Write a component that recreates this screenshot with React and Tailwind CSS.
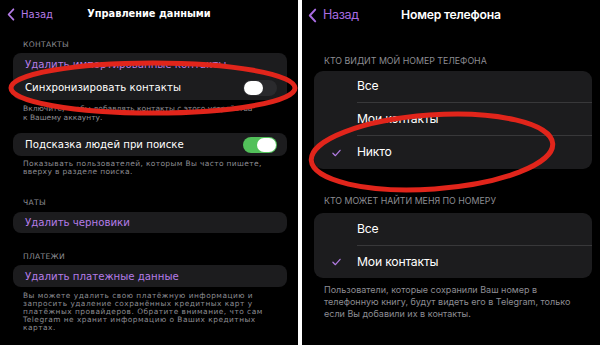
import React from 'react';

const leftFont = { fontFamily: '"DejaVu Sans", "Noto Sans", sans-serif' };
const rightFont = { fontFamily: 'Inter, "Noto Sans", sans-serif' };

function Chevron({ className }) {
  return (
    <svg viewBox="0 0 10 16" className={className} fill="none">
      <path d="M8 1.5 L2 8 L8 14.5" stroke="currentColor" strokeWidth="2.2" strokeLinecap="round" strokeLinejoin="round" />
    </svg>
  );
}

function Check() {
  return (
    <svg viewBox="0 0 10 8" className="w-[9px] h-[8px] text-[#b07ae0]" fill="none">
      <path d="M1 4.2 L3.8 7 L9 1" stroke="currentColor" strokeWidth="1.4" strokeLinecap="round" strokeLinejoin="round" />
    </svg>
  );
}

function Toggle({ on }) {
  return (
    <div className={`w-[34px] h-[16px] rounded-full flex items-center px-[1px] ${on ? 'bg-[#52c05a] justify-end' : 'bg-[#2a2a2d] justify-start'}`}>
      <div className="w-[19px] h-[14px] rounded-full bg-white" />
    </div>
  );
}

function LeftSection({ title, h, pb }) {
  return (
    <div className={`flex items-end px-[23px] text-[7.6px] leading-[8px] text-[#8d8d93] tracking-[0.3px] ${h} ${pb}`}>
      {title}
    </div>
  );
}

// footer text with the same line breaks as the screenshot
function Lines({ lines, className }) {
  return (
    <div className={`px-[23px] text-[#8d8d93] whitespace-nowrap ${className}`}>
      {lines.map((l) => (
        <div key={l}>{l}</div>
      ))}
    </div>
  );
}

function LeftPanel() {
  return (
    <div className="w-[298px] h-full bg-black flex flex-col" style={leftFont}>
      <div className="h-[28px] grid grid-cols-[1fr_auto_1fr] items-center">
        <div className="flex items-center pl-[7px] text-[#b57ce8]">
          <Chevron className="w-[8px] h-[13px]" />
          <span className="ml-[6px] text-[10px]">Назад</span>
        </div>
        <div className="text-white font-bold text-[9.8px]">Управление данными</div>
        <div />
      </div>

      <LeftSection title="КОНТАКТЫ" h="h-[25px]" pb="pb-[4px]" />
      <div className="ml-[13px] mr-[11px] rounded-[8px] bg-[#1c1c1e] text-[10.2px]">
        <div className="h-[23px] flex items-center px-[12px] text-[#b57ce8]">Удалить импортированные контакты</div>
        <div className="h-[24px] flex items-center justify-between pl-[12px] pr-[10px] text-white">
          <span>Синхронизировать контакты</span>
          <Toggle on={false} />
        </div>
      </div>
      <Lines
        className="pt-[4px] text-[7.5px] leading-[9px]"
        lines={['Включите, чтобы добавлять контакты с этого устройства', 'к Вашему аккаунту.']}
      />

      <div className="mt-[11px] ml-[13px] mr-[11px] rounded-[8px] bg-[#1c1c1e] text-[10.2px]">
        <div className="h-[23px] flex items-center justify-between pl-[12px] pr-[10px] text-white">
          <span>Подсказка людей при поиске</span>
          <Toggle on />
        </div>
      </div>
      <Lines
        className="pt-[4px] text-[7.5px] leading-[8.2px] tracking-[0.35px]"
        lines={['Показывать пользователей, которым Вы часто пишете,', 'вверху в разделе поиска.']}
      />

      <LeftSection title="ЧАТЫ" h="h-[36px]" pb="pb-[5px]" />
      <div className="ml-[13px] mr-[11px] rounded-[8px] bg-[#1c1c1e] text-[10.2px]">
        <div className="h-[21px] flex items-center px-[12px] text-[#b57ce8]">Удалить черновики</div>
      </div>

      <LeftSection title="ПЛАТЕЖИ" h="h-[32px]" pb="pb-[4px]" />
      <div className="ml-[13px] mr-[11px] rounded-[8px] bg-[#1c1c1e] text-[10.2px]">
        <div className="h-[22px] flex items-center px-[12px] text-[#b57ce8]">Удалить платежные данные</div>
      </div>
      <Lines
        className="pt-[5px] text-[7.4px] leading-[8px] tracking-[0.5px]"
        lines={[
          'Вы можете удалить свою платёжную информацию и',
          'запросить удаление сохранённых кредитных карт у',
          'платёжных провайдеров. Обратите внимание, что сам',
          'Telegram не хранит информацию о Ваших кредитных',
          'картах.',
        ]}
      />
    </div>
  );
}

function OptionRow({ label, checked, last, h }) {
  return (
    <div className={`flex ${h}`}>
      <div className="w-[43px] pl-[18px] flex items-center">{checked && <Check />}</div>
      <div className={`flex-1 flex items-center text-white ${last ? '' : 'border-b border-[#38383a]'}`}>{label}</div>
    </div>
  );
}

function RightPanel() {
  return (
    <div className="w-[298px] h-full bg-black flex flex-col" style={rightFont}>
      <div className="h-[30px] grid grid-cols-[1fr_auto_1fr] items-center">
        <div className="flex items-center pl-[6px] text-[#a96ce2]">
          <Chevron className="w-[9px] h-[15px]" />
          <span className="ml-[6px] text-[12.5px] tracking-[-0.3px]">Назад</span>
        </div>
        <div className="text-white font-semibold text-[12.2px] tracking-[-0.2px]">Номер телефона</div>
        <div />
      </div>

      <div className="h-[41px] flex items-end pb-[5px] px-[22px] text-[8.8px] leading-[10px] text-[#8d8d93]">
        КТО ВИДИТ МОЙ НОМЕР ТЕЛЕФОНА
      </div>
      <div className="ml-[12px] mr-[8px] rounded-[9px] bg-[#1c1c1e] text-[12.2px] tracking-[-0.2px]">
        <OptionRow label="Все" h="h-[32px]" />
        <OptionRow label="Мои контакты" h="h-[33px]" />
        <OptionRow label="Никто" checked last h="h-[33px]" />
      </div>

      <div className="h-[44px] flex items-end pb-[7px] px-[22px] text-[8.8px] leading-[10px] text-[#8d8d93]">
        КТО МОЖЕТ НАЙТИ МЕНЯ ПО НОМЕРУ
      </div>
      <div className="ml-[12px] mr-[8px] rounded-[9px] bg-[#1c1c1e] text-[12.2px] tracking-[-0.2px]">
        <OptionRow label="Все" h="h-[33px]" />
        <OptionRow label="Мои контакты" checked last h="h-[32px]" />
      </div>
      <div className="px-[22px] pt-[6px] text-[9px] leading-[12px] text-[#8d8d93]">
        Пользователи, которые сохранили Ваш номер в телефонную книгу, будут видеть его в Telegram, только если Вы добавили их в контакты.
      </div>
    </div>
  );
}

export default function App() {
  return (
    <div className="relative w-[600px] h-[345px] bg-white flex justify-between overflow-hidden">
      <LeftPanel />
      <RightPanel />
      <svg className="absolute inset-0 pointer-events-none" width="600" height="345" viewBox="0 0 600 345">
        <ellipse cx="153" cy="88" rx="142" ry="25" fill="none" stroke="#e1251b" strokeWidth="5" />
        <ellipse cx="432" cy="152" rx="121" ry="37" fill="none" stroke="#e1251b" strokeWidth="5" transform="rotate(-4 432 152)" />
      </svg>
    </div>
  );
}
